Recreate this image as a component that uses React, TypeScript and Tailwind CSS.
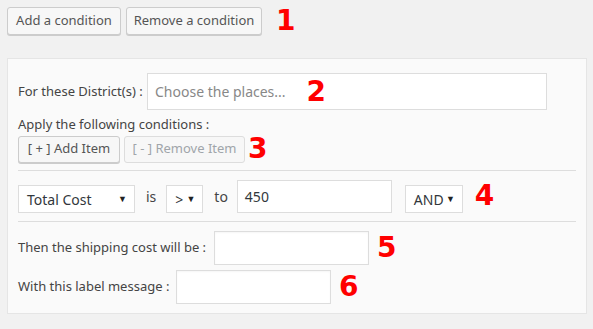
import React from "react";

const font = { fontFamily: '"Noto Sans", "Open Sans", sans-serif' };

const Num = ({ n, className = "" }: { n: string; className?: string }) => (
  <span
    className={`text-[28px] font-bold leading-none text-[#ff0000] ${className}`}
    style={{ fontFamily: '"DejaVu Sans", sans-serif' }}
  >
    {n}
  </span>
);

// fake select box with the small black arrow
const Select = ({ label, className = "" }: { label: string; className?: string }) => (
  <div
    className={`h-[28px] flex items-center justify-between border border-[#dddddd] bg-white pl-[8px] pr-[7px] text-[14px] text-[#32373c] ${className}`}
  >
    <span>{label}</span>
    <span className="text-[9px] text-[#222]">▼</span>
  </div>
);

const Input = ({ className = "" }: { className?: string }) => (
  <div className={`border border-[#dddddd] bg-white shadow-[inset_0_1px_2px_rgba(0,0,0,0.04)] ${className}`} />
);

export default function App() {
  return (
    <div className="w-[593px] h-[329px] bg-[#f1f1f1] overflow-hidden" style={font}>
      {/* top buttons */}
      <div className="flex items-center gap-[5px] pt-[7px] pl-[7px]">
        <button className="h-[28px] w-[114px] rounded-[3px] border border-[#cccccc] bg-[#f7f7f7] shadow-[0_1px_0_#cccccc] text-[13px] text-[#555]">
          Add a condition
        </button>
        <button className="h-[28px] w-[136px] rounded-[3px] border border-[#cccccc] bg-[#f7f7f7] shadow-[0_1px_0_#cccccc] text-[13px] text-[#555]">
          Remove a condition
        </button>
        <Num n="1" className="ml-[9px]" />
      </div>

      {/* condition panel */}
      <div className="mt-[23px] ml-[7px] w-[580px] h-[256px] border border-[#e5e5e5] bg-[#fafafa] px-[10px] pt-[14px] text-[13px] text-[#444]">
        <div className="flex items-center">
          <span className="w-[129px]">For these District(s) :</span>
          <div className="h-[37px] w-[400px] flex items-center border border-[#dddddd] bg-white pl-[7px] text-[14px] text-[#888]">
            Choose the places...
            <Num n="2" className="ml-[21px]" />
          </div>
        </div>

        <div className="mt-[5px] leading-[18px]">Apply the following conditions :</div>
        <div className="mt-[2px] flex items-center gap-[4px]">
          <button className="h-[27px] w-[102px] rounded-[3px] border border-[#cccccc] bg-[#f7f7f7] shadow-[0_1px_0_#cccccc] text-[13px] text-[#555]">
            [ + ] Add Item
          </button>
          <button className="h-[27px] w-[121px] rounded-[3px] border border-[#dddddd] bg-[#f7f7f7] text-[13px] text-[#a0a5aa]">
            [ - ] Remove Item
          </button>
          <Num n="3" className="ml-[-1px]" />
        </div>

        <div className="mt-[7px] border-t border-[#dddddd]" />

        {/* condition row */}
        <div className="mt-[9px] flex items-end">
          <Select label="Total Cost" className="w-[117px]" />
          <span className="ml-[11px] mb-[6px] text-[14px]">is</span>
          <Select label=">" className="ml-[10px] w-[37px] pl-[5px]" />
          <span className="ml-[11px] mb-[6px] text-[14px]">to</span>
          <div className="ml-[9px] h-[33px] w-[155px] flex items-center border border-[#dddddd] bg-white pl-[7px] text-[14px] text-[#32373c]">
            450
          </div>
          <Select label="AND" className="ml-[13px] w-[58px] pl-[7px]" />
          <Num n="4" className="ml-[12px] mb-[3px]" />
        </div>

        <div className="mt-[8px] border-t border-[#dddddd]" />

        <div className="mt-[9px] flex items-center">
          <span className="w-[196px]">Then the shipping cost will be :</span>
          <Input className="h-[34px] w-[155px]" />
          <Num n="5" className="ml-[8px]" />
        </div>
        <div className="mt-[5px] flex items-center">
          <span className="w-[158px]">With this label message :</span>
          <Input className="h-[34px] w-[155px]" />
          <Num n="6" className="ml-[8px]" />
        </div>
      </div>
    </div>
  );
}
